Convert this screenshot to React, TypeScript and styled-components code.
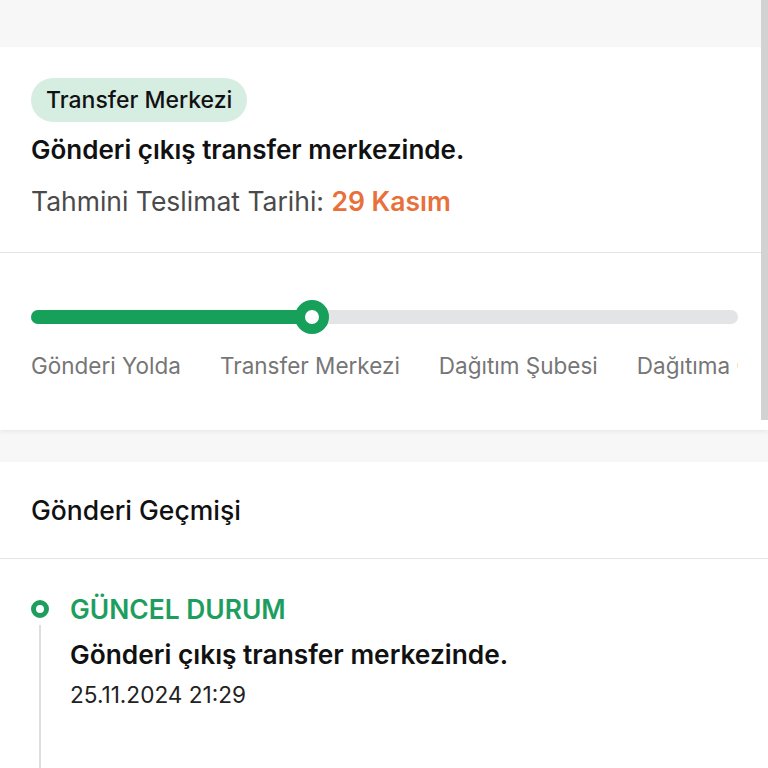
import React from 'react';
import styled, { createGlobalStyle } from 'styled-components';

const GlobalStyle = createGlobalStyle`
  html, body {
    margin: 0;
    padding: 0;
    background: #f7f7f7;
    font-family: Inter, "Noto Sans", "Liberation Sans", sans-serif;
    color: #111;
  }
`;

const steps = ['Gönderi Yolda', 'Transfer Merkezi', 'Dağıtım Şubesi', 'Dağıtıma Çıktı', 'Teslim Edildi'];

const App: React.FC = () => {
  return (
    <>
      <GlobalStyle />
      <Page>
        <TopBand />
        <Card>
          <SummarySection>
            <Badge>Transfer Merkezi</Badge>
            <Title>Gönderi çıkış transfer merkezinde.</Title>
            <Estimate>
              Tahmini Teslimat Tarihi: <Highlight>29 Kasım</Highlight>
            </Estimate>
          </SummarySection>
          <ProgressSection>
            <Track>
              <Fill style={{ width: 281 }} />
              <Knob style={{ left: 281 }} />
            </Track>
            <StepLabels>
              {steps.map((step) => (
                <StepLabel key={step}>{step}</StepLabel>
              ))}
            </StepLabels>
          </ProgressSection>
        </Card>
        <Gap />
        <Card>
          <HistoryHeader>Gönderi Geçmişi</HistoryHeader>
          <Timeline>
            <TimelineHead>
              <Dot />
              <StatusLabel>GÜNCEL DURUM</StatusLabel>
            </TimelineHead>
            <TimelineBody>
              <EventTitle>Gönderi çıkış transfer merkezinde.</EventTitle>
              <EventDate>25.11.2024 21:29</EventDate>
            </TimelineBody>
          </Timeline>
        </Card>
        <ScrollThumb />
      </Page>
    </>
  );
};

export default App;

const Page = styled.div`
  position: relative;
  width: 768px;
  height: 768px;
  overflow: hidden;
`;

const TopBand = styled.div`
  height: 47px;
  background: #f7f7f7;
`;

const Card = styled.div`
  background: #ffffff;
  box-shadow: 0 2px 4px rgba(0, 0, 0, 0.06);
`;

const SummarySection = styled.div`
  padding: 31px 31px 35px;
  border-bottom: 1px solid #e4e4e4;
`;

const Badge = styled.div`
  display: inline-flex;
  align-items: center;
  height: 44px;
  padding: 0 15px;
  border-radius: 22px;
  background: #d6ede2;
  font-size: 23px;
  font-weight: 500;
  color: #111;
`;

const Title = styled.div`
  margin-top: 12px;
  font-size: 26px;
  line-height: 32px;
  font-weight: 600;
  color: #111;
`;

const Estimate = styled.div`
  margin-top: 19px;
  font-size: 26.5px;
  line-height: 32px;
  color: #4a4a4a;
`;

const Highlight = styled.span`
  color: #e8703a;
  font-weight: 600;
`;

const ProgressSection = styled.div`
  padding: 57px 30px 50px 31px;
`;

const Track = styled.div`
  position: relative;
  height: 14px;
  border-radius: 7px;
  background: #e3e4e6;
`;

const Fill = styled.div`
  height: 100%;
  border-radius: 7px;
  background: #16a05a;
`;

const Knob = styled.div`
  position: absolute;
  top: 50%;
  width: 34px;
  height: 34px;
  box-sizing: border-box;
  border: 10px solid #16a05a;
  border-radius: 50%;
  background: #fff;
  transform: translate(-50%, -50%);
`;

const StepLabels = styled.div`
  display: flex;
  gap: 39px;
  margin-top: 28px;
  overflow: hidden;
  white-space: nowrap;
`;

const StepLabel = styled.span`
  flex: none;
  font-size: 22.5px;
  line-height: 28px;
  color: #767676;
`;

const Gap = styled.div`
  height: 32px;
`;

const HistoryHeader = styled.div`
  display: flex;
  align-items: center;
  height: 96px;
  padding: 0 31px;
  border-bottom: 1px solid #e4e4e4;
  font-size: 26.5px;
  font-weight: 500;
  color: #111;
`;

const Timeline = styled.div`
  padding: 34px 31px 0;
`;

const TimelineHead = styled.div`
  display: flex;
  align-items: center;
  gap: 21px;
`;

const Dot = styled.div`
  flex: none;
  width: 18px;
  height: 18px;
  box-sizing: border-box;
  border: 5px solid #1e9e5e;
  border-radius: 50%;
`;

const StatusLabel = styled.div`
  font-size: 26.4px;
  line-height: 32px;
  font-weight: 600;
  color: #1e9e5e;
`;

const TimelineBody = styled.div`
  margin-left: 8px;
  padding: 14px 0 80px 29px;
  border-left: 2px solid #dedede;
`;

const EventTitle = styled.div`
  font-size: 26.3px;
  line-height: 32px;
  font-weight: 600;
  color: #111;
`;

const EventDate = styled.div`
  margin-top: 10px;
  font-size: 22.6px;
  line-height: 28px;
  color: #222;
`;

const ScrollThumb = styled.div`
  position: absolute;
  top: 0;
  right: 0;
  width: 7px;
  height: 420px;
  background: #d2d2d2;
`;
